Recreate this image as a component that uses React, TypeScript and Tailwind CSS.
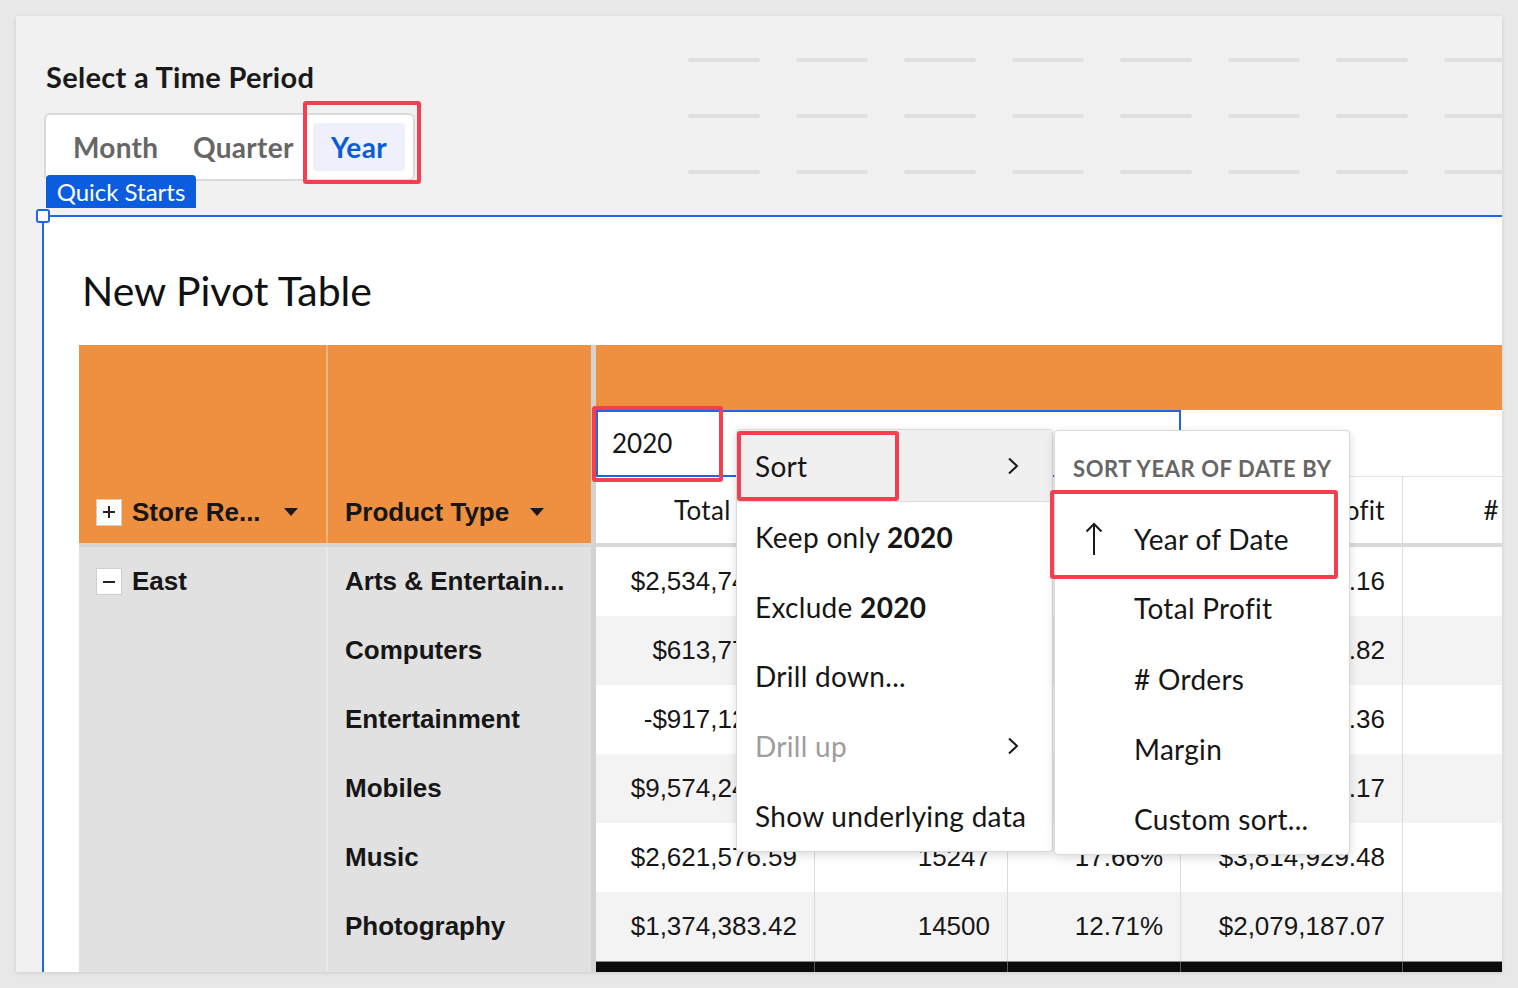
import React from "react";

const rows = [
  { label: "Arts & Entertain...", values: ["$2,534,742.18", "16480", "13.91%", "$4,412,318.16", "17204"] },
  { label: "Computers", values: ["$613,775.25", "5312", "9.84%", "$1,205,441.82", "5890"] },
  { label: "Entertainment", values: ["-$917,124.60", "8821", "-4.12%", "$736,002.36", "9107"] },
  { label: "Mobiles", values: ["$9,574,243.71", "20133", "18.42%", "$12,880,615.17", "21544"] },
  { label: "Music", values: ["$2,621,576.59", "15247", "17.66%", "$3,814,929.48", "16032"] },
  { label: "Photography", values: ["$1,374,383.42", "14500", "12.71%", "$2,079,187.07", "14988"] },
];

const colWidths = ["w-[219px]", "w-[193px]", "w-[173px]", "w-[222px]", "w-[201px]"];
const headers = ["Total Sales", "# Orders", "Margin", "Total Profit", "# Orders"];

function Caret() {
  return (
    <svg width="14" height="8" viewBox="0 0 14 8" className="shrink-0">
      <path d="M0 0 L14 0 L7 8 Z" fill="#1a1a1a" />
    </svg>
  );
}

function ToggleBox({ plus }: { plus?: boolean }) {
  return (
    <span className="flex h-[27px] w-[26px] shrink-0 items-center justify-center border border-[#cfcfcf] bg-white">
      <svg width="14" height="14" viewBox="0 0 14 14">
        <path d="M1 7 H13" stroke="#222" strokeWidth="2" />
        {plus && <path d="M7 1 V13" stroke="#222" strokeWidth="2" />}
      </svg>
    </span>
  );
}

function Chevron() {
  return (
    <svg width="12" height="18" viewBox="0 0 12 18">
      <path d="M2 1.5 L10 9 L2 16.5" fill="none" stroke="#1a1a1a" strokeWidth="2" />
    </svg>
  );
}

function RedBox({ className }: { className: string }) {
  return <div className={`pointer-events-none absolute rounded-[3px] border-4 border-[#f33f50] ${className}`} />;
}

export default function App() {
  return (
    <div className="min-h-screen bg-[#e8e8e8] p-4 font-['Lato',sans-serif] text-[#161616]">
      <div className="relative flex h-[956px] flex-col overflow-hidden bg-[#f1f1f1] shadow-[0_1px_4px_rgba(0,0,0,0.12)]">
        {/* top controls */}
        <div className="flex h-[199px] shrink-0">
          <div className="w-[672px] shrink-0 pl-[28px] pt-[44px]">
            <h2 className="ml-[2px] text-[29px] font-bold leading-[34px] tracking-[0.3px] text-[#1a1a1a]">
              Select a Time Period
            </h2>
            <div className="relative mt-[19px] flex h-[68px] w-[371px] items-center rounded-[6px] border-2 border-[#dadada] bg-white pl-[27px] text-[28px] font-bold tracking-[0.3px] text-[#666]">
              <span className="w-[83px]">Month</span>
              <span className="ml-[37px] w-[102px]">Quarter</span>
              <span className="ml-[18px] flex h-[48px] w-[92px] items-center justify-center rounded-[4px] bg-[#eef0fb] text-[#0b5bd9]">
                Year
              </span>
              <RedBox className="left-[257px] top-[-14px] h-[83px] w-[118px]" />
            </div>
          </div>
          <div className="flex flex-1 flex-col gap-[52px] overflow-hidden pt-[42px]">
            {[0, 1, 2].map((r) => (
              <div key={r} className="flex gap-[36px]">
                {Array.from({ length: 8 }).map((_, i) => (
                  <div key={i} className="h-[4px] w-[72px] shrink-0 rounded-full bg-[#e0e0e0]" />
                ))}
              </div>
            ))}
          </div>
        </div>

        {/* pivot panel */}
        <div className="relative ml-[26px] flex-1 border-l-2 border-t-2 border-[#1f66e5] bg-white">
          <div className="absolute left-[2px] top-[-42px] flex h-[33px] w-[150px] items-center justify-center rounded-t-[4px] bg-[#0b5cde] text-[24px] text-white">
            Quick Starts
          </div>
          <div className="absolute left-[-8px] top-[-8px] h-[14px] w-[14px] rounded-[3px] border-2 border-[#1f66e5] bg-white" />

          <div className="pl-[35px] pt-[48px]">
            <h1 className="ml-[3px] text-[41px] leading-[52px] text-[#111]">New Pivot Table</h1>

            <div className="relative mt-[28px] flex font-['Liberation_Sans',Arial,sans-serif] text-[26px]">
              {/* row labels */}
              <div className="flex w-[512px] shrink-0 flex-col">
                <div className="flex h-[198px] bg-[#ef9040] font-bold">
                  <div className="flex w-[247px] shrink-0 flex-col">
                    <div className="mt-auto flex h-[62px] items-center pl-[17px]">
                      <ToggleBox plus />
                      <span className="ml-[10px]">Store Re...</span>
                      <span className="ml-[23px]">
                        <Caret />
                      </span>
                    </div>
                  </div>
                  <div className="flex flex-1 flex-col border-l-2 border-[#f2b47f]">
                    <div className="mt-auto flex h-[62px] items-center pl-[17px]">
                      <span>Product Type</span>
                      <span className="ml-[21px]">
                        <Caret />
                      </span>
                    </div>
                  </div>
                </div>
                <div className="h-[4px] bg-[#d6d6d6]" />
                <div className="flex h-[500px] bg-[#e1e1e1] font-bold">
                  <div className="w-[247px] shrink-0">
                    <div className="flex h-[69px] items-center pl-[17px]">
                      <ToggleBox />
                      <span className="ml-[10px]">East</span>
                    </div>
                  </div>
                  <div className="flex-1 border-l-2 border-[#e8e8e8]">
                    {rows.map((r) => (
                      <div key={r.label} className="flex h-[69px] items-center pl-[17px]">
                        {r.label}
                      </div>
                    ))}
                  </div>
                </div>
              </div>

              <div className="w-[5px] shrink-0 bg-[#d3d3d3]" />

              {/* values */}
              <div className="flex w-[1000px] shrink-0 flex-col">
                <div className="h-[65px] bg-[#ef9040]" />
                <div className="flex h-[67px] font-['Lato',sans-serif]">
                  <div className="flex w-[585px] shrink-0 items-center border-2 border-[#1f66e5] pl-[14px]">2020</div>
                  <div className="flex-1 border-b border-[#e3e3e3]" />
                </div>
                <div className="flex h-[66px] font-['Lato',sans-serif] tracking-[0.3px]">
                  {headers.map((h, i) => (
                    <div
                      key={i}
                      className={`flex shrink-0 items-center justify-end border-r border-[#dcdcdc] pr-[17px] ${colWidths[i]}`}
                    >
                      {h}
                    </div>
                  ))}
                </div>
                <div className="h-[4px] bg-[#d9d9d9]" />
                {rows.map((r, ri) => (
                  <div key={r.label} className={`flex h-[69px] ${ri % 2 === 0 ? "bg-white" : "bg-[#f3f3f3]"}`}>
                    {r.values.map((v, i) => (
                      <div
                        key={i}
                        className={`flex shrink-0 items-center justify-end border-r border-[#dcdcdc] pr-[17px] ${colWidths[i]}`}
                      >
                        {v}
                      </div>
                    ))}
                  </div>
                ))}
                <div className="flex h-[40px] border-t border-[#8a8a8a] bg-[#0b0b0b]">
                  {colWidths.map((w, i) => (
                    <div key={i} className={`shrink-0 border-r border-[#5a5a5a] ${w}`} />
                  ))}
                </div>
              </div>

              {/* context menu */}
              <div className="absolute left-[657px] top-[84px] flex h-[423px] w-[317px] flex-col overflow-hidden rounded-[4px] border border-[#d9d9d9] bg-white font-['Lato',sans-serif] text-[28px] tracking-[0.3px] shadow-[0_3px_10px_rgba(0,0,0,0.14)]">
                <div className="flex h-[72px] shrink-0 items-center justify-between border-b border-[#dcdcdc] bg-[#f0f0f0] pl-[18px] pr-[33px]">
                  <span>Sort</span>
                  <Chevron />
                </div>
                <div className="flex h-[70px] items-center pl-[18px]">
                  Keep only&nbsp;<b>2020</b>
                </div>
                <div className="flex h-[70px] items-center pl-[18px]">
                  Exclude&nbsp;<b>2020</b>
                </div>
                <div className="flex h-[70px] items-center pl-[18px]">Drill down...</div>
                <div className="flex h-[70px] items-center justify-between pl-[18px] pr-[33px] text-[#9d9d9d]">
                  <span>Drill up</span>
                  <Chevron />
                </div>
                <div className="flex h-[70px] items-center pl-[18px]">Show underlying data</div>
              </div>

              {/* sort submenu */}
              <div className="absolute left-[975px] top-[85px] flex h-[425px] w-[296px] flex-col rounded-[4px] border border-[#d9d9d9] bg-white font-['Lato',sans-serif] text-[28px] tracking-[0.3px] shadow-[0_3px_10px_rgba(0,0,0,0.14)]">
                <div className="flex h-[73px] shrink-0 items-center pl-[18px] pt-[2px] text-[22px] font-bold tracking-[0.6px] text-[#666]">
                  SORT YEAR OF DATE BY
                </div>
                <div className="relative flex h-[70px] items-center pl-[79px]">
                  <svg width="18" height="34" viewBox="0 0 18 34" className="absolute left-[30px] top-[18px]">
                    <path d="M9 2 V33 M1.5 9.5 L9 2 L16.5 9.5" fill="none" stroke="#1a1a1a" strokeWidth="2" />
                  </svg>
                  Year of Date
                </div>
                <div className="flex h-[70px] items-center pl-[79px]">Total Profit</div>
                <div className="flex h-[71px] items-center pl-[79px]"># Orders</div>
                <div className="flex h-[70px] items-center pl-[79px]">Margin</div>
                <div className="flex h-[71px] items-center pl-[79px]">Custom sort...</div>
              </div>

              <RedBox className="left-[513px] top-[61px] h-[76px] w-[131px]" />
              <RedBox className="left-[658px] top-[86px] h-[70px] w-[162px]" />
              <RedBox className="left-[971px] top-[145px] h-[89px] w-[288px]" />
            </div>
          </div>
        </div>
      </div>
    </div>
  );
}
